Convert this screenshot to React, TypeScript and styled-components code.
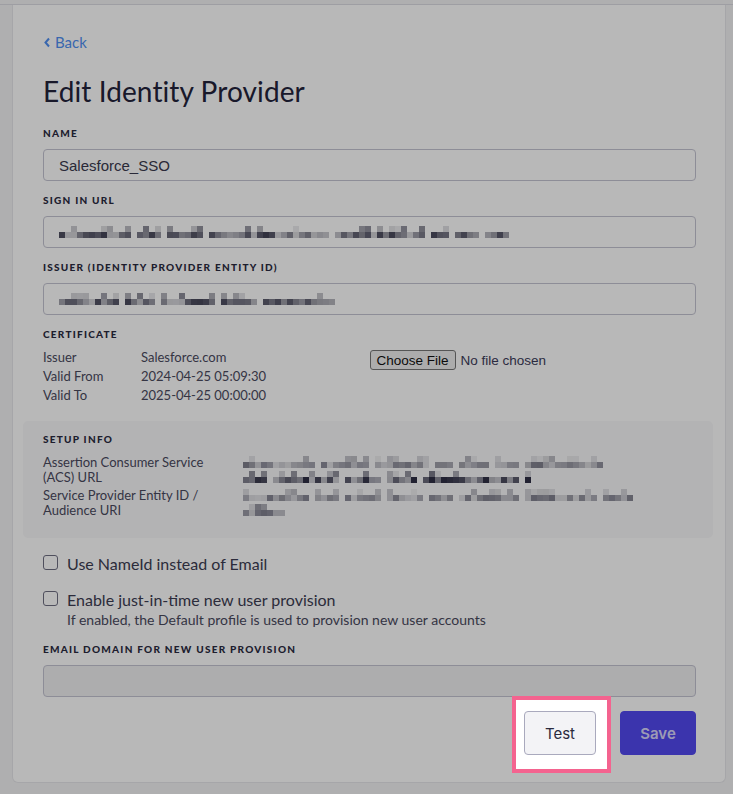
import React from "react";
import styled, { createGlobalStyle } from "styled-components";

const GlobalStyle = createGlobalStyle`
  html, body { margin: 0; padding: 0; }
  body {
    background: #f3f3f4;
    font-family: Lato, "Open Sans", sans-serif;
    color: #2a2a40;
    -webkit-font-smoothing: antialiased;
  }
  * { box-sizing: border-box; }
`;

const Page = styled.div`
  padding-top: 4px;
  min-height: 794px;
`;

const TopRule = styled.div`
  border-top: 1px solid #dcdce2;
`;

const CardRow = styled.div`
  padding: 0 7px 11px 12px;
`;

const Card = styled.main`
  background: #ffffff;
  border: 1px solid #e6e6ea;
  border-top: none;
  border-radius: 0 0 6px 6px;
  padding: 27px 29px 27px 30px;
  display: flex;
  flex-direction: column;
`;

const BackLink = styled.a`
  display: inline-flex;
  align-items: center;
  gap: 4px;
  align-self: flex-start;
  color: #4f8ff2;
  font-size: 15px;
  line-height: 20px;
  text-decoration: none;
  cursor: pointer;
`;

const Title = styled.h1`
  margin: 23px 0 0;
  font-size: 28px;
  line-height: 32px;
  font-weight: 400;
  letter-spacing: 0.1px;
  color: #23233b;
`;

const Label = styled.div<{ $top: number }>`
  margin-top: ${(p) => p.$top}px;
  font-size: 10px;
  line-height: 14px;
  font-weight: 900;
  letter-spacing: 1.25px;
  text-transform: uppercase;
  color: #2a2a40;
`;

const InputBox = styled.div<{ $disabled?: boolean }>`
  margin-top: 9px;
  height: 32px;
  border: 1px solid #c4c4d2;
  border-radius: 4px;
  background: ${(p) => (p.$disabled ? "#f0f0f2" : "#ffffff")};
  display: flex;
  align-items: center;
  padding: 0 15px;
  font-family: "Liberation Sans", Arial, sans-serif;
  font-size: 15px;
  color: #3a3a4e;
`;

const CertGrid = styled.div`
  margin-top: 7px;
  display: grid;
  grid-template-columns: 1fr 1fr;
`;

const CertTable = styled.div`
  display: grid;
  grid-template-columns: 98px 1fr;
  font-size: 13px;
  line-height: 19px;
  color: #4a4a5e;
`;

const FileInput = styled.input`
  margin-top: 2px;
  font-family: "Liberation Sans", Arial, sans-serif;
  font-size: 13.5px;
  color: #3c3c5a;
  &::file-selector-button {
    font-family: "Liberation Sans", Arial, sans-serif;
    font-size: 13.5px;
    color: #111;
    background: #efefef;
    border: 1px solid #767676;
    border-radius: 3px;
    padding: 0 6px;
    height: 20px;
    margin-right: 5px;
  }
`;

const SetupBox = styled.section`
  margin: 16px -17px 0 -20px;
  padding: 11px 17px 20px 20px;
  background: #f9f9fa;
  border-radius: 5px;
`;

const SetupGrid = styled.div`
  margin-top: 9px;
  display: grid;
  grid-template-columns: 200px 1fr;
  row-gap: 3px;
  font-size: 13px;
  line-height: 15px;
  color: #4a4a5e;
`;

const SetupLabel = styled.div`
  padding-right: 26px;
`;

const SetupValue = styled.div`
  display: flex;
  flex-direction: column;
  gap: 3px;
  padding-top: 1px;
`;

const CheckRow = styled.label<{ $top: number }>`
  margin-top: ${(p) => p.$top}px;
  display: grid;
  grid-template-columns: 15px 1fr;
  column-gap: 9px;
  align-items: start;
  font-size: 16px;
  line-height: 20px;
  color: #3c3c52;
`;

const Box = styled.span`
  width: 15px;
  height: 15px;
  margin-top: 1px;
  border: 1.5px solid #6e6e82;
  border-radius: 3px;
  background: #fff;
`;

const Helper = styled.div`
  grid-column: 2;
  font-size: 14px;
  line-height: 18px;
  color: #4a4a5e;
  margin-top: 1px;
`;

const ButtonRow = styled.div`
  margin-top: 14px;
  display: flex;
  justify-content: flex-end;
  gap: 24px;
`;

const SpotWrap = styled.div`
  position: relative;
  display: inline-flex;
`;

const Spotlight = styled.div`
  position: absolute;
  top: -15px;
  left: -12px;
  right: -15px;
  bottom: -18px;
  border: 4px solid #f4638f;
  box-shadow: 0 0 0 9999px rgba(0, 0, 0, 0.28);
  pointer-events: none;
  z-index: 5;
`;

const Button = styled.button<{ $primary?: boolean }>`
  height: 44px;
  padding: 0 ${(p) => (p.$primary ? 19 : 20)}px;
  min-width: ${(p) => (p.$primary ? 76 : 71)}px;
  border-radius: 4px;
  font-family: Inter, "Liberation Sans", sans-serif;
  font-size: 15px;
  font-weight: ${(p) => (p.$primary ? 600 : 400)};
  border: 1px solid ${(p) => (p.$primary ? "#5248f0" : "#a9a9bd")};
  background: ${(p) => (p.$primary ? "#5248f0" : "#f3f3f6")};
  color: ${(p) => (p.$primary ? "rgba(255,255,255,0.8)" : "#2a2a3e")};
  cursor: pointer;
`;

/* pixelated (redacted) value */
function rng(seed: number) {
  let s = seed >>> 0;
  return () => {
    s = (s * 1664525 + 1013904223) >>> 0;
    return s / 4294967296;
  };
}

const MosaicSvg = styled.svg`
  display: block;
`;

function Mosaic({ width, seed, strength = 1 }: { width: number; seed: number; strength?: number }) {
  const r = rng(seed);
  const cell = 6;
  const cols = Math.floor(width / cell);
  const rects: React.ReactNode[] = [];
  let run = 0;
  for (let i = 0; i < cols; i++) {
    run++;
    if (run > 3 && r() < 0.16) {
      run = 0;
      continue;
    }
    const a1 = Math.min(1, (0.1 + r() * 0.55) * strength);
    const a2 = Math.min(1, (0.15 + r() * 0.6) * strength);
    if (r() < 0.35) {
      rects.push(<rect key={`t${i}`} x={i * cell} y={0} width={cell} height={6} fill="#2e2e44" opacity={a1 * 0.7} />);
    }
    rects.push(<rect key={`b${i}`} x={i * cell} y={6} width={cell} height={6} fill="#2e2e44" opacity={a2} />);
  }
  return (
    <MosaicSvg width={width} height={12} viewBox={`0 0 ${width} 12`}>
      {rects}
    </MosaicSvg>
  );
}

export default function App() {
  return (
    <>
      <GlobalStyle />
      <Page>
        <TopRule />
        <CardRow>
          <Card>
            <BackLink>
              <svg width="8" height="11" viewBox="0 0 8 11">
                <path d="M6 1.5 L2.5 5.5 L6 9.5" fill="none" stroke="#4f8ff2" strokeWidth="2" />
              </svg>
              Back
            </BackLink>
            <Title>Edit Identity Provider</Title>

            <Label $top={19}>Name</Label>
            <InputBox>Salesforce_SSO</InputBox>

            <Label $top={12}>Sign in URL</Label>
            <InputBox>
              <Mosaic width={451} seed={7} strength={1.2} />
            </InputBox>

            <Label $top={12}>Issuer (Identity Provider Entity ID)</Label>
            <InputBox>
              <Mosaic width={281} seed={23} strength={1.2} />
            </InputBox>

            <Label $top={12}>Certificate</Label>
            <CertGrid>
              <CertTable>
                <span>Issuer</span>
                <span>Salesforce.com</span>
                <span>Valid From</span>
                <span>2024-04-25 05:09:30</span>
                <span>Valid To</span>
                <span>2025-04-25 00:00:00</span>
              </CertTable>
              <div>
                <FileInput type="file" />
              </div>
            </CertGrid>

            <SetupBox>
              <Label $top={0}>Setup Info</Label>
              <SetupGrid>
                <SetupLabel>Assertion Consumer Service (ACS) URL</SetupLabel>
                <SetupValue>
                  <Mosaic width={362} seed={41} strength={0.8} />
                  <Mosaic width={290} seed={57} strength={1.4} />
                </SetupValue>
                <SetupLabel>Service Provider Entity ID / Audience URI</SetupLabel>
                <SetupValue>
                  <Mosaic width={395} seed={91} strength={0.8} />
                  <Mosaic width={48} seed={13} strength={1.1} />
                </SetupValue>
              </SetupGrid>
            </SetupBox>

            <CheckRow $top={16}>
              <Box />
              <span>Use NameId instead of Email</span>
            </CheckRow>
            <CheckRow $top={16}>
              <Box />
              <span>Enable just-in-time new user provision</span>
              <Helper>If enabled, the Default profile is used to provision new user accounts</Helper>
            </CheckRow>

            <Label $top={13}>Email domain for new user provision</Label>
            <InputBox $disabled />

            <ButtonRow>
              <SpotWrap>
                <Button>Test</Button>
                <Spotlight />
              </SpotWrap>
              <Button $primary>Save</Button>
            </ButtonRow>
          </Card>
        </CardRow>
      </Page>
    </>
  );
}
